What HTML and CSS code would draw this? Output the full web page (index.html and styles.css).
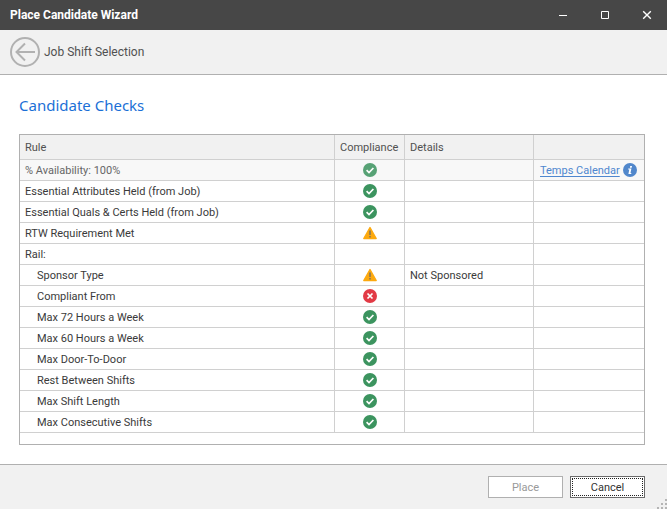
FILE: index.html
```html
<!DOCTYPE html>
<html lang="en">
<head>
<meta charset="utf-8">
<meta name="viewport" content="width=device-width, initial-scale=1">
<title>Place Candidate Wizard</title>
<link rel="stylesheet" href="styles.css">
</head>
<body>
<svg class="sprite" aria-hidden="true">
  <symbol id="pass" viewBox="0 0 14 14"><circle cx="7" cy="7" r="7" fill="#3c945f"/><path d="M3.6 7.2 6 9.5 10.4 5" fill="none" stroke="#fff" stroke-width="1.7"/></symbol>
  <symbol id="warn" viewBox="0 0 14 14"><path d="M7 1.5 13.2 12.5H.8Z" fill="#fca90f" stroke="#fca90f" stroke-width="1.4" stroke-linejoin="round"/><path d="M7 4.5V9M7 10V11.6" stroke="#85755a" stroke-width="1.6"/></symbol>
  <symbol id="fail" viewBox="0 0 14 14"><circle cx="7" cy="7" r="7" fill="#e23a45"/><path d="M4.5 4.5 9.5 9.5M9.5 4.5 4.5 9.5" stroke="#fff" stroke-width="1.7"/></symbol>
</svg>

<header class="titlebar">
  <h1 class="title">Place Candidate Wizard</h1>
  <div class="window-controls">
    <button class="window-button" type="button" aria-label="Minimize"><svg viewBox="0 0 10 10"><path d="M1 5.5H9"/></svg></button>
    <button class="window-button" type="button" aria-label="Maximize"><svg viewBox="0 0 10 10"><path d="M1.5 1.5H8.5V8.5H1.5Z"/></svg></button>
    <button class="window-button" type="button" aria-label="Close"><svg viewBox="0 0 10 10"><path d="M1.2 1.2 8.8 8.8M8.8 1.2 1.2 8.8" stroke-width="1.4"/></svg></button>
  </div>
</header>

<nav class="stepbar">
  <button class="back" type="button">
    <svg class="back-icon" viewBox="0 0 30 30" aria-hidden="true"><circle cx="15" cy="15" r="14"/><path d="M25 15H7M15 6.5 6.5 15 15 23.5"/></svg>
    <span>Job Shift Selection</span>
  </button>
</nav>

<main class="content">
  <h2 class="heading">Candidate Checks</h2>
  <div class="grid">
    <table class="checks">
      <colgroup><col><col class="col-compliance"><col class="col-details"><col class="col-link"></colgroup>
      <thead>
        <tr><th scope="col">Rule</th><th scope="col">Compliance</th><th scope="col">Details</th><th></th></tr>
      </thead>
      <tbody>
        <tr class="muted"><td>% Availability: 100%</td><td><svg class="status" role="img" aria-label="Passed"><use href="#pass"/></svg></td><td></td>
          <td><div class="calendar"><a href="#calendar">Temps Calendar</a><svg class="info" viewBox="0 0 14 14" aria-hidden="true"><circle cx="7" cy="7" r="7"/><path d="M7.2 3H9L8.7 4.7H6.9ZM5.3 5.6H8.4L7.5 10H8.4L8.2 11H5.4L6.3 6.6H5.1Z"/></svg></div></td></tr>
        <tr><td>Essential Attributes Held (from Job)</td><td><svg class="status" role="img" aria-label="Passed"><use href="#pass"/></svg></td><td></td><td></td></tr>
        <tr><td>Essential Quals &amp; Certs Held (from Job)</td><td><svg class="status" role="img" aria-label="Passed"><use href="#pass"/></svg></td><td></td><td></td></tr>
        <tr><td>RTW Requirement Met</td><td><svg class="status" role="img" aria-label="Warning"><use href="#warn"/></svg></td><td></td><td></td></tr>
        <tr><td>Rail:</td><td></td><td></td><td></td></tr>
        <tr class="child"><td>Sponsor Type</td><td><svg class="status" role="img" aria-label="Warning"><use href="#warn"/></svg></td><td>Not Sponsored</td><td></td></tr>
        <tr class="child"><td>Compliant From</td><td><svg class="status" role="img" aria-label="Failed"><use href="#fail"/></svg></td><td></td><td></td></tr>
        <tr class="child"><td>Max 72 Hours a Week</td><td><svg class="status" role="img" aria-label="Passed"><use href="#pass"/></svg></td><td></td><td></td></tr>
        <tr class="child"><td>Max 60 Hours a Week</td><td><svg class="status" role="img" aria-label="Passed"><use href="#pass"/></svg></td><td></td><td></td></tr>
        <tr class="child"><td>Max Door-To-Door</td><td><svg class="status" role="img" aria-label="Passed"><use href="#pass"/></svg></td><td></td><td></td></tr>
        <tr class="child"><td>Rest Between Shifts</td><td><svg class="status" role="img" aria-label="Passed"><use href="#pass"/></svg></td><td></td><td></td></tr>
        <tr class="child"><td>Max Shift Length</td><td><svg class="status" role="img" aria-label="Passed"><use href="#pass"/></svg></td><td></td><td></td></tr>
        <tr class="child"><td>Max Consecutive Shifts</td><td><svg class="status" role="img" aria-label="Passed"><use href="#pass"/></svg></td><td></td><td></td></tr>
      </tbody>
    </table>
  </div>
</main>

<footer class="footer">
  <button class="button" type="button" disabled>Place</button>
  <button class="button button-focused" type="button">Cancel</button>
  <svg class="grip" viewBox="0 0 10 10" aria-hidden="true"><path d="M8 0h2v2H8ZM4 4h2v2H4ZM8 4h2v2H8ZM0 8h2v2H0ZM4 8h2v2H4ZM8 8h2v2H8Z"/></svg>
</footer>
</body>
</html>
```
FILE: styles.css
```css
* { box-sizing: border-box; }

body {
  margin: 0;
  min-height: 100vh;
  display: flex;
  flex-direction: column;
  background: #fff;
  color: #3a3a3a;
  font-family: Tahoma, Roboto, sans-serif;
  font-size: 11px;
  line-height: 16px;
}

button { font: inherit; }

.sprite { position: absolute; width: 0; height: 0; }

.titlebar {
  display: flex;
  justify-content: space-between;
  height: 30px;
  padding-left: 10px;
  background: #474747;
  color: #fff;
}

.title { margin: 0; font-size: 12px; line-height: 30px; font-weight: 700; }

.window-controls { display: flex; }

.window-button {
  display: flex;
  align-items: center;
  justify-content: center;
  width: 42px;
  padding: 0 0 0 2px;
  border: 0;
  background: none;
}

.window-button svg { width: 10px; height: 10px; fill: none; stroke: #fff; }

.stepbar {
  display: flex;
  align-items: center;
  height: 45px;
  padding: 0 10px;
  border-bottom: 1px solid #b0b0b0;
  background: #f1f1f1;
}

.back {
  display: flex;
  align-items: center;
  gap: 4px;
  padding: 0;
  border: 0;
  background: none;
  color: #505050;
  font-size: 12px;
}

.back-icon { width: 30px; height: 30px; fill: none; stroke: #b1b1b1; stroke-width: 2; }

.content {
  flex: 1;
  display: flex;
  flex-direction: column;
  padding: 18px 22px 19px 19px;
}

.heading {
  margin: 0 0 17px;
  color: #1b6fd6;
  font-family: "Segoe UI", "Noto Sans", sans-serif;
  font-size: 15px;
  line-height: 24px;
  font-weight: 400;
}

.grid { flex: 1; padding-bottom: 11px; border: 1px solid #b0b0b0; }

.checks { width: 100%; table-layout: fixed; border-collapse: separate; border-spacing: 0; }
.col-compliance { width: 70px; }
.col-details { width: 129px; }
.col-link { width: 110px; }

.checks th,
.checks td {
  height: 21px;
  padding: 2px 5px 0;
  border: 0 solid #d0d0d0;
  border-width: 0 1px 1px 0;
  text-align: left;
  font-weight: 400;
  white-space: nowrap;
}

.checks th { height: 25px; background: #f1f1f1; color: #505050; }
.checks th:last-child,
.checks td:last-child { border-right-width: 0; }
.checks .child td:first-child { padding-left: 17px; }
.checks .muted td { background: #f8f8f8; color: #666; }
.muted .status { opacity: 0.85; }

.status { display: block; width: 14px; height: 14px; margin: 0 auto 2px; }

.calendar { display: flex; align-items: center; justify-content: space-between; padding: 0 2px 0 1px; }
.calendar a { color: #4f87cf; text-underline-offset: 2px; }
.info { width: 14px; height: 14px; margin-bottom: 2px; fill: #5187cb; }
.info path { fill: #fff; }

.footer {
  position: relative;
  display: flex;
  justify-content: flex-end;
  gap: 7px;
  padding: 11px 22px;
  border-top: 1px solid #b0b0b0;
  background: #f1f1f1;
}

.button {
  width: 75px;
  height: 22px;
  padding: 2px 0 0;
  border: 1px solid #6b6b6b;
  background: #fff;
  color: #333;
}

.button:disabled { border-color: #b0b0b0; color: #999; }
.button-focused { outline: 1px dotted #222; outline-offset: -3px; }

.grip { position: absolute; right: 0; bottom: 0; width: 10px; height: 10px; fill: #b5b5b5; }
```
